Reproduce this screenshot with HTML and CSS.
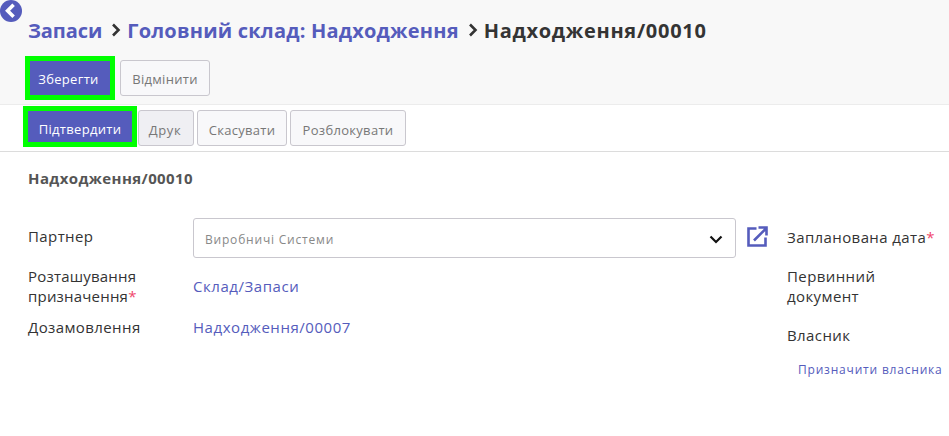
FILE: index.html
```html
<!DOCTYPE html>
<html lang="uk">
<head>
<meta charset="utf-8">
<title>Надходження/00010</title>
<link rel="stylesheet" href="styles.css">
</head>
<body>
<a class="back" href="#" aria-label="Назад">
  <svg viewBox="0 0 22 22" width="22" height="22"><circle cx="11" cy="11" r="11" fill="#555cbc"/><path d="M13.600 4.800 7.600 10.800l6 6" fill="none" stroke="#fff" stroke-width="3.600"/></svg>
</a>
<header class="control">
  <nav class="crumbs">
    <a class="first" href="#">Запаси</a>
    <svg class="sep" viewBox="0 0 10 14" width="10" height="14"><path d="M2 1.500 7.500 7 2 12.500" fill="none" stroke="#333" stroke-width="2.600"/></svg>
    <a href="#">Головний склад: Надходження</a>
    <svg class="sep" viewBox="0 0 10 14" width="10" height="14"><path d="M2 1.500 7.500 7 2 12.500" fill="none" stroke="#333" stroke-width="2.600"/></svg>
    <span class="current">Надходження/00010</span>
  </nav>
  <div class="actions">
    <button class="btn primary save">Зберегти</button>
    <button class="btn discard">Відмінити</button>
  </div>
</header>
<div class="statusbar">
  <button class="btn primary confirm">Підтвердити</button>
  <button class="btn print">Друк</button>
  <button class="btn">Скасувати</button>
  <button class="btn">Розблокувати</button>
</div>
<main class="sheet">
  <h2 class="title">Надходження/00010</h2>
  <div class="columns">
    <div class="group left">
      <div class="row partner">
        <label>Партнер</label>
        <div class="value">
          <div class="select">
            <span>Виробничі Системи</span>
            <svg viewBox="0 0 14 9" width="14" height="9"><path d="M1.500 1.500 7 7l5.500-5.500" fill="none" stroke="#111" stroke-width="2.200"/></svg>
          </div>
          <svg class="ext" viewBox="0 0 21 21" width="21" height="21"><path d="M9.500 2.500H1.500v17h17v-8" fill="none" stroke="#555cbc" stroke-width="2.600"/><path d="M7 14.500 19 2.500M11.500 1.500h8v8" fill="none" stroke="#555cbc" stroke-width="2.600"/></svg>
        </div>
      </div>
      <div class="row dest">
        <label>Розташування призначення<em>*</em></label>
        <a href="#">Склад/Запаси</a>
      </div>
      <div class="row back-order">
        <label>Дозамовлення</label>
        <a href="#">Надходження/00007</a>
      </div>
    </div>
    <div class="group right">
      <div class="rlabel date">Запланована дата<em>*</em></div>
      <div class="rlabel doc">Первинний документ</div>
      <div class="rlabel owner">Власник</div>
      <a class="assign" href="#">Призначити власника</a>
    </div>
  </div>
</main>
</body>
</html>
```
FILE: styles.css
```css
* { box-sizing: border-box; }
html, body { margin: 0; padding: 0; }
body {
  position: relative;
  width: 949px;
  height: 436px;
  overflow: hidden;
  background: #fff;
  font-family: "Open Sans", "Noto Sans", sans-serif;
  font-size: 15px;
  letter-spacing: .4px;
  color: #333;
}
a { color: #555cbc; text-decoration: none; }
em { color: #f0476c; font-style: normal; }

.back { position: absolute; left: 0; top: 0; line-height: 0; }

.control {
  height: 105px;
  padding: 15px 0 0 28px;
  background: #f8f8f8;
  border-bottom: 1px solid #ececec;
}
.crumbs {
  display: flex;
  align-items: center;
  height: 30px;
  font-size: 20px;
  font-weight: 700;
  letter-spacing: .2px;
}
.crumbs .first { letter-spacing: -.1px; }
.crumbs .sep { margin: 0 6px 0 9px; }
.crumbs .current { color: #343434; letter-spacing: .7px; }

.actions {
  display: flex;
  align-items: flex-start;
  gap: 10px;
  margin-top: 15px;
  padding-left: 2px;
}
.btn {
  height: 36px;
  padding: 4px 0 0;
  border: 1px solid #c9c7ce;
  border-radius: 3px;
  background: #f8f8fa;
  color: #777;
  font: 13px "Open Sans", "Noto Sans", sans-serif;
  letter-spacing: .3px;
}
.btn.primary {
  border: 0;
  border-radius: 0;
  background: #555cbc;
  color: #fff;
  outline: 5px solid #00ff00;
}
.save { width: 80px; height: 34px; margin-top: 1px; padding: 2px 3px 0 0; }
.discard { width: 90px; padding-top: 2px; }

.statusbar {
  display: flex;
  align-items: flex-start;
  gap: 3px;
  height: 47px;
  padding: 5px 0 0 28px;
  border-bottom: 1px solid #dcdcdc;
}
.confirm { width: 104px; height: 31px; margin: 1px 3px 0 0; padding: 5px 0 0; }
.print { width: 56px; background: #efeff3; padding-right: 2px; letter-spacing: .6px; }
.statusbar .btn:nth-child(3) { width: 90px; }
.statusbar .btn:nth-child(4) { width: 116px; }

.sheet { padding: 16px 0 0 28px; }
.title { margin: 0; font-size: 15px; line-height: 20px; font-weight: 700; color: #555; }

.columns { display: flex; margin-top: 30px; }
.left { width: 759px; }
.row { display: flex; align-items: center; }
.row label { width: 165px; line-height: 20px; color: #333; }
.row a { letter-spacing: .55px; }
.partner { height: 40px; }
.partner label { margin-top: -4px; }
.partner .value { display: flex; align-items: center; }
.select {
  display: flex;
  align-items: center;
  justify-content: space-between;
  width: 543px;
  height: 40px;
  padding: 2px 12px 0 11px;
  border: 1px solid #c9c7ce;
  border-radius: 3px;
  font-size: 12px;
  letter-spacing: .8px;
  color: #888;
}
.ext { margin: -4px 0 0 11px; }
.dest { height: 40px; margin-top: 8px; }
.dest label { letter-spacing: .2px; }
.dest a { margin-top: -1px; }
.back-order { height: 20px; margin-top: 11px; }

.right { flex: 1; }
.rlabel { width: 140px; line-height: 20px; }
.date { padding-top: 9px; height: 48px; white-space: nowrap; }
.doc { height: 59px; }
.owner { height: 35px; }
.assign { display: block; margin-top: 1px; padding-left: 11px; font-size: 12px; letter-spacing: .8px; white-space: nowrap; }
```
